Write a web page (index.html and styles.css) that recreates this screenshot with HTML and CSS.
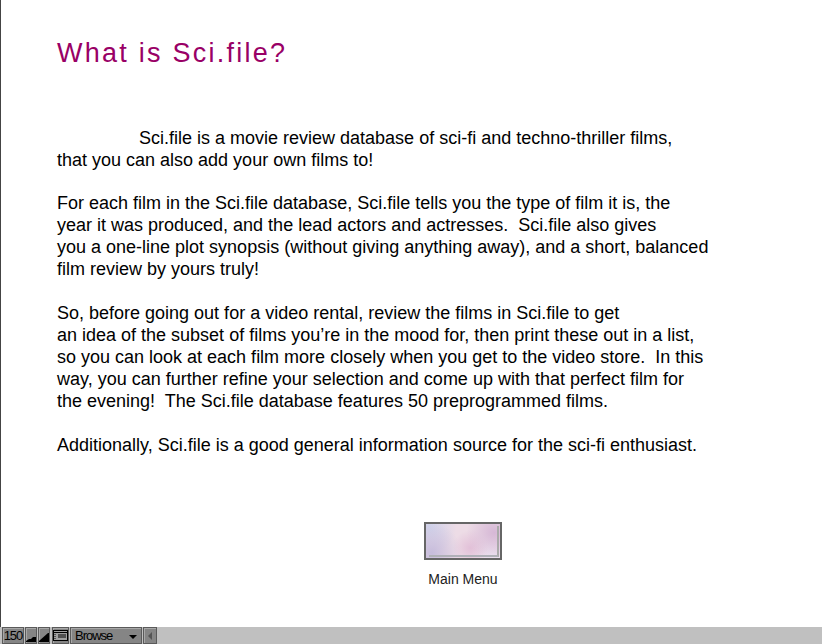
FILE: index.html
```html
<!DOCTYPE html>
<html>
<head>
	<meta charset="utf-8">
	<title>What is Sci.file?</title>
	<link rel="stylesheet" href="styles.css">
</head>
<body>
	<div class="stage">
		<h1 class="title">What is Sci.file?</h1>
		<div class="copy">
			<p class="intro"><span class="indent"></span>Sci.file is a movie review database of sci-fi and techno-thriller films,<br>that you can also add your own films to!</p>
			<p>For each film in the Sci.file database, Sci.file tells you the type of film it is, the<br>year it was produced, and the lead actors and actresses.&nbsp; Sci.file also gives<br>you a one-line plot synopsis (without giving anything away), and a short, balanced<br>film review by yours truly!</p>
			<p>So, before going out for a video rental, review the films in Sci.file to get<br>an idea of the subset of films you’re in the mood for, then print these out in a list,<br>so you can look at each film more closely when you get to the video store.&nbsp; In this<br>way, you can further refine your selection and come up with that perfect film for<br>the evening!&nbsp; The Sci.file database features 50 preprogrammed films.</p>
			<p>Additionally, Sci.file is a good general information source for the sci-fi enthusiast.</p>
		</div>
		<div class="menu">
			<div class="menuBtn"><div class="menuBevel"></div></div>
			<div class="menuLabel">Main Menu</div>
		</div>
	</div>
	<div class="statusbar">
		<div class="cell zoom">150</div>
		<div class="cell icon"><svg width="10" height="13"><path d="M0 12 L3 10 L5 10 L7 8 L10 8 L10 13 L0 13 Z" fill="#000"/></svg></div>
		<div class="cell icon"><svg width="10" height="13"><path d="M0 12 L9 4 L10 4 L10 13 L0 13 Z" fill="#000"/></svg></div>
		<div class="cell icon wide"><svg width="15" height="13"><rect x="0.5" y="1.5" width="14" height="10" fill="#a0a0a0" stroke="#000"/><path d="M1 3.5 H14 M5 6 H13 M5 8 H13" stroke="#000"/><path d="M2 5 V11" stroke="#000" stroke-dasharray="1 1"/></svg></div>
		<div class="cell mode"><span>Browse</span><i class="arrow"></i></div>
		<div class="cell scroll"><i class="back"></i></div>
	</div>
</body>
</html>
```
FILE: styles.css
```css
html, body {
	margin: 0;
	padding: 0;
}
body {
	width: 822px;
	height: 644px;
	display: flex;
	flex-direction: column;
	background: #fff;
	overflow: hidden;
	font-family: "Liberation Sans", Arial, sans-serif;
}
.stage {
	flex: 1;
	border-left: 1px solid #444;
	padding: 38px 0 0 56px;
}
.title {
	margin: 0;
	font-size: 27px;
	line-height: 31px;
	font-weight: normal;
	letter-spacing: 2.25px;
	color: #990066;
}
.copy {
	margin-top: 58px;
	font-size: 18px;
	line-height: 22px;
	color: #000;
}
.copy p {
	margin: 0 0 22px;
}
.copy .intro {
	margin-bottom: 21px;
}
.indent {
	display: inline-block;
	width: 82px;
}
.menu {
	margin-top: 66px;
	margin-left: 367px;
	width: 78px;
}
.menuBtn {
	box-sizing: border-box;
	width: 78px;
	height: 38px;
	padding: 2px 1px 1px 3px;
	border: 2px solid #666;
	background:
		radial-gradient(circle at 92% 25%, #d6b8d6 0, rgba(214,184,214,0) 38%),
		radial-gradient(circle at 60% 70%, #e2c0d8 0, rgba(226,192,216,0) 35%),
		radial-gradient(circle at 8% 85%, #c6bcdc 0, rgba(198,188,220,0) 40%),
		radial-gradient(circle at 90% 95%, #ece4f2 0, rgba(236,228,242,0) 30%),
		radial-gradient(circle at 5% 10%, #cfd2ea 0, rgba(207,210,234,0) 35%),
		#eddce6;
}
.menuBevel {
	box-sizing: border-box;
	height: 100%;
	border-right: 2px solid #aaa;
	border-bottom: 2px solid #b0b0b8;
}
.menuLabel {
	margin-top: 10px;
	text-align: center;
	font-size: 14px;
	line-height: 18px;
	color: #222;
	white-space: nowrap;
}
.statusbar {
	height: 17px;
	padding-left: 2px;
	background: #c0c0c0;
	display: flex;
	align-items: stretch;
	gap: 1px;
	font-size: 13px;
	letter-spacing: -1px;
	color: #000;
}
.cell {
	box-sizing: border-box;
	background: #858585;
	border: 1px solid #5a5a5a;
	box-shadow: inset 1px 1px 0 #a8a8a8;
	display: flex;
	align-items: center;
}
.zoom {
	width: 22px;
	justify-content: center;
}
.icon {
	width: 12px;
	overflow: hidden;
}
.icon.wide {
	width: 17px;
	margin-left: 1px;
}
.mode {
	width: 72px;
	padding-left: 4px;
	justify-content: space-between;
}
.arrow {
	margin-right: 4px;
	margin-top: 3px;
	border-left: 4px solid transparent;
	border-right: 4px solid transparent;
	border-top: 4px solid #000;
}
.scroll {
	width: 14px;
	justify-content: center;
}
.back {
	border-top: 4px solid transparent;
	border-bottom: 4px solid transparent;
	border-right: 4px solid #555;
}
```
